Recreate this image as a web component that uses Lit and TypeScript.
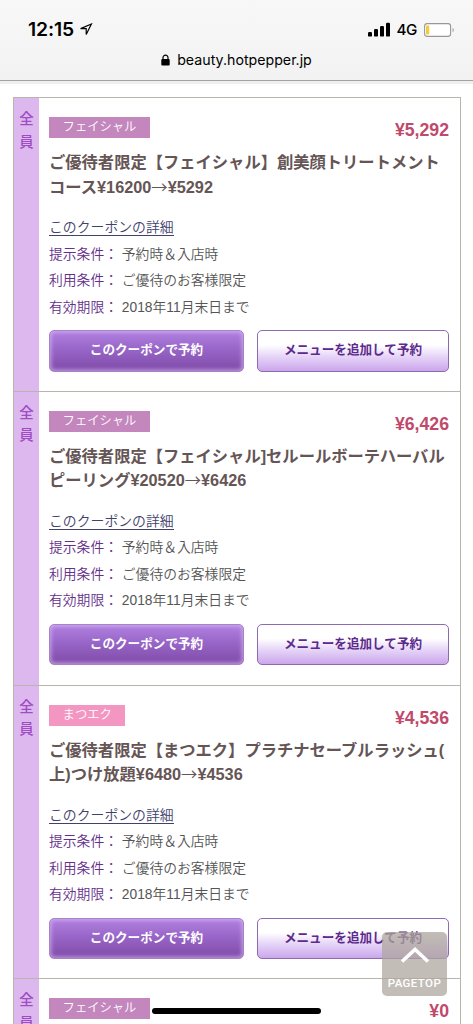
import { LitElement, html, css } from "lit";
import { customElement, property } from "lit/decorators.js";
import { classMap } from "lit/directives/class-map.js";

interface Coupon {
  tag: string;
  kind: "facial" | "lash";
  price: string;
  title: string[];
}

const COUPONS: Coupon[] = [
  { tag: "フェイシャル", kind: "facial", price: "¥5,292", title: ["ご優待者限定【フェイシャル】創美顔トリートメント", "コース¥16200→¥5292"] },
  { tag: "フェイシャル", kind: "facial", price: "¥6,426", title: ["ご優待者限定【フェイシャル]セルールボーテハーバル", "ピーリング¥20520→¥6426"] },
  { tag: "まつエク", kind: "lash", price: "¥4,536", title: ["ご優待者限定【まつエク】プラチナセーブルラッシュ(", "上)つけ放題¥6480→¥4536"] },
  { tag: "フェイシャル", kind: "facial", price: "¥0", title: [] },
];

const CONDITIONS = [
  ["提示条件", "予約時＆入店時"],
  ["利用条件", "ご優待のお客様限定"],
  ["有効期限", "2018年11月末日まで"],
];

@customElement("browser-bar")
export class BrowserBar extends LitElement {
  static styles = css`
    :host {
      display: block;
      height: 84px;
      box-sizing: border-box;
      background: linear-gradient(#f8f8f8, #f2f2f2 80px);
      color: #000;
      font-family: "Inter", sans-serif;
    }
    .status {
      display: flex;
      align-items: center;
      height: 29px;
      padding: 15px 18px 0 28px;
    }
    .time { font-size: 19.3px; font-weight: 600; letter-spacing: -0.1px; line-height: 29px; }
    .arrow { margin-left: 5px; }
    .spacer { flex: 1; }
    .net { font-size: 15.2px; font-weight: 500; letter-spacing: -0.4px; margin: 0 7px 0 5px; }
    .address {
      display: flex;
      align-items: center;
      justify-content: center;
      height: 32px;
      gap: 7px;
      font-size: 14.2px;
      line-height: 20px;
    }
    .edge { height: 4px; margin-top: 4px; border-top: 1px solid #a2a2a2; background: #efefef; box-sizing: border-box; }
    svg { display: block; flex: none; }
  `;

  render() {
    return html`
      <div class="status">
        <span class="time">12:15</span>
        <svg class="arrow" width="14" height="13" viewBox="0 0 14 13">
          <path d="M12.4 1 1.6 5.6H7.2V11.4Z" fill="none" stroke="#000" stroke-width="1.2" stroke-linejoin="miter" />
        </svg>
        <span class="spacer"></span>
        <svg width="23" height="15" viewBox="0 0 23 15">
          <rect x="0" y="10" width="4" height="4.6" rx="1.2" />
          <rect x="6" y="7" width="4" height="7.6" rx="1.2" />
          <rect x="12" y="4" width="4" height="10.6" rx="1.2" />
          <rect x="18" y="0.8" width="4" height="13.8" rx="1.2" />
        </svg>
        <span class="net">4G</span>
        <svg width="31" height="14" viewBox="0 0 31 14">
          <rect x="0.6" y="0.6" width="26" height="12.8" rx="2.6" fill="#fff" stroke="#989898" stroke-width="1.1" />
          <rect x="2" y="2.4" width="3.2" height="9" rx="0.8" fill="#f3cb3b" />
          <path d="M28.6 5V9.2Q29.8 8.6 29.8 7.1T28.6 5Z" fill="#989898" />
        </svg>
      </div>
      <div class="address">
        <svg width="9" height="12" viewBox="0 0 9 12">
          <rect x="0.3" y="5" width="8.4" height="6.6" rx="1" />
          <path d="M2 5.5V3.6a2.5 2.5 0 0 1 5 0V5.5" fill="none" stroke="#000" stroke-width="1.2" />
        </svg>
        <span>beauty.hotpepper.jp</span>
      </div>
      <div class="edge"></div>
    `;
  }
}

@customElement("coupon-card")
export class CouponCard extends LitElement {
  @property({ attribute: false }) coupon!: Coupon;

  static styles = css`
    :host { display: flex; height: 100%; }
    .side {
      flex: none;
      width: 25px;
      padding-top: 10px;
      box-sizing: border-box;
      background: #dcb8ee;
      color: #a04cc4;
      font-size: 14.4px;
      font-weight: 500;
      line-height: 22.6px;
      text-align: center;
    }
    .side span { display: block; }
    .body { flex: 1; padding: 19px 11px 0 10px; min-width: 0; }
    .head { display: flex; justify-content: space-between; height: 33px; }
    .tag {
      height: 21px;
      padding: 0 13.6px;
      color: #fff;
      font-size: 12.3px;
      font-weight: 350;
      line-height: 21px;
    }
    .facial { background: #c387be; }
    .lash { background: #f397c2; }
    .price { color: #bf4a6b; font-size: 17.7px; font-weight: 700; line-height: 26px; }
    .title { color: #655555; font-size: 16.3px; font-weight: 700; line-height: 24.5px; white-space: nowrap; height: 65px; }
    .title span { display: block; height: 24.5px; }
    .title i { font-family: "Noto Sans CJK JP", sans-serif; font-style: normal; font-weight: 350; line-height: 1; }
    .line { font-size: 13.8px; font-weight: 350; line-height: 26.5px; height: 26.5px; color: #555; white-space: nowrap; }
    .link { color: #41416b; border-bottom: 1px solid #41416b; display: inline-block; line-height: 16px; font-size: 13.85px; }
    .label { color: #64308a; }
    .buttons { display: flex; gap: 13px; padding-top: 9px; }
    .btn {
      box-sizing: border-box;
      height: 41.5px;
      border: 1px solid #8e6bb0;
      border-radius: 5px;
      font-size: 12.6px;
      font-weight: 700;
      line-height: 39.5px;
      text-align: center;
      white-space: nowrap;
    }
    .reserve {
      width: 195px;
      color: #fff;
      border-color: #a583c4;
      background: linear-gradient(#b080e0, #9866c8 45%, #8450ae 90%);
      box-shadow: inset 0 0 4px 1px rgba(222, 190, 248, 0.75);
    }
    .add { width: 192px; color: #5c2a8c; background: linear-gradient(#fff 35%, #e5d3f7 65%, #cba6ec); }
  `;

  private titleLine(text: string) {
    const [before, after] = text.split("→");
    return after === undefined ? html`<span>${before}</span>` : html`<span>${before}<i>→</i>${after}</span>`;
  }

  render() {
    const c = this.coupon;
    return html`
      <div class="side"><span>全</span><span>員</span></div>
      <div class="body">
        <div class="head">
          <span class=${classMap({ tag: true, [c.kind]: true })}>${c.tag}</span>
          <span class="price">${c.price}</span>
        </div>
        ${c.title.length
          ? html`
              <div class="title">${c.title.map((t) => this.titleLine(t))}</div>
              <div class="line"><span class="link">このクーポンの詳細</span></div>
              ${CONDITIONS.map(([k, v]) => html`<div class="line"><span class="label">${k}：</span> ${v}</div>`)}
              <div class="buttons">
                <div class="btn reserve">このクーポンで予約</div>
                <div class="btn add">メニューを追加して予約</div>
              </div>
            `
          : ""}
      </div>
    `;
  }
}

@customElement("app-root")
export class AppRoot extends LitElement {
  static styles = css`
    :host {
      display: block;
      position: relative;
      width: 473px;
      height: 1024px;
      overflow: hidden;
      background: #fff;
      font-family: "Liberation Sans", "Noto Sans CJK JP", sans-serif;
    }
    .list { margin: 13px 12px 0 13px; border: 1px solid #b9b5ad; }
    .item { height: 293.75px; box-sizing: border-box; border-bottom: 1.5px solid #b9b5ad; }
    .top {
      position: absolute;
      left: 382px;
      top: 932px;
      width: 65px;
      height: 64px;
      border-radius: 5px;
      background: rgba(174, 167, 157, 0.75);
      color: #fff;
      display: flex;
      flex-direction: column;
      align-items: center;
      font: 500 11.5px/14px Roboto, sans-serif;
      letter-spacing: 0.4px;
    }
    .top svg { display: block; margin: 14px 0 12px; }
    .home { position: absolute; left: 152px; top: 1008px; width: 169px; height: 6px; border-radius: 3px; background: #000; }
  `;

  render() {
    return html`
      <browser-bar></browser-bar>
      <div class="list" lang="ja">
        ${COUPONS.map((c) => html`<div class="item"><coupon-card .coupon=${c}></coupon-card></div>`)}
      </div>
      <div class="top">
        <svg width="30" height="18" viewBox="0 0 30 18">
          <path d="M2 15.5 15 3.5 28 15.5" fill="none" stroke="#fff" stroke-width="3.6" />
        </svg>
        <span>PAGETOP</span>
      </div>
      <div class="home"></div>
    `;
  }
}
